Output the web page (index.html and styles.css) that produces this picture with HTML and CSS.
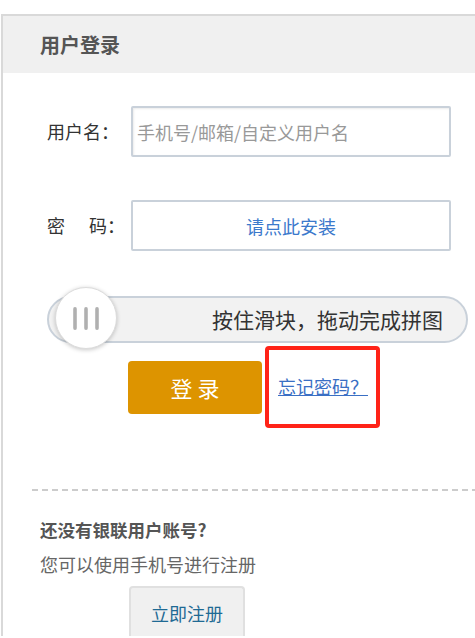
FILE: index.html
```html
<!DOCTYPE html>
<html lang="zh-CN">
<head>
<meta charset="utf-8">
<link rel="stylesheet" href="styles.css">
</head>
<body>
<div class="panel">
  <div class="header"><h2 class="title">用户登录</h2></div>
  <div class="form">
    <div class="row">
      <label class="label">用户名：</label>
      <input class="input" type="text" placeholder="手机号/邮箱/自定义用户名">
    </div>
    <div class="row row-pw">
      <label class="label"><span class="pw-first">密</span>码：</label>
      <div class="input install">请点此安装</div>
    </div>
    <div class="slider">
      <div class="knob"><span class="bar"></span><span class="bar"></span><span class="bar"></span></div>
      <span class="slider-text">按住滑块，拖动完成拼图</span>
    </div>
    <div class="actions">
      <button class="login">登 录</button>
      <div class="mark"><a class="forgot" href="#">忘记密码？</a></div>
    </div>
  </div>
  <div class="divider"></div>
  <div class="register">
    <div class="reg-title">还没有银联用户账号?</div>
    <div class="reg-desc">您可以使用手机号进行注册</div>
    <button class="reg-btn">立即注册</button>
  </div>
</div>
</body>
</html>
```
FILE: styles.css
```css
* { box-sizing: border-box; }
html, body { margin: 0; padding: 0; background: #fff; }
body {
  font-family: "Noto Sans CJK SC", "Noto Sans", sans-serif;
  color: #333;
  overflow: hidden;
}
.panel {
  margin: 14px 0 0 1px;
  border-top: 2px solid #d9d9d9;
  border-left: 2px solid #d9d9d9;
}
.header {
  height: 57px;
  background: #f0f0f0;
  padding-left: 37px;
  display: flex;
  align-items: center;
}
.title {
  margin: 0;
  font-size: 20px;
  font-weight: bold;
  color: #555;
  line-height: 1;
}
.form {
  padding-left: 44px;
  padding-top: 33px;
}
.row {
  display: flex;
  align-items: center;
}
.row-pw { margin-top: 43px; }
.label {
  width: 84px;
  font-size: 18px;
  color: #333;
  line-height: 1;
  margin-top: -2px;
}
.pw-first { margin-right: 24px; }
.input {
  width: 320px;
  height: 51px;
  border: 2px solid #c9d1da;
  border-radius: 2px;
  font-family: inherit;
  font-size: 18px;
  padding: 0 4px;
  outline: none;
  box-shadow: inset 1px 1px 2px rgba(0,0,0,0.08);
}
.input::placeholder { color: #999; }
.install {
  display: flex;
  align-items: center;
  justify-content: center;
  color: #3b79cc;
  box-shadow: none;
}
.slider {
  position: relative;
  margin-top: 45px;
  width: 421px;
  height: 47px;
  border: 2px solid #c9d1da;
  border-radius: 24px;
  background: #f2f2f2;
  display: flex;
  align-items: center;
  justify-content: flex-end;
  padding-right: 23px;
}
.slider-text {
  font-size: 21px;
  color: #333;
  line-height: 1;
}
.knob {
  position: absolute;
  left: 6px;
  top: -11px;
  width: 62px;
  height: 62px;
  border-radius: 50%;
  background: #fff;
  border: 1px solid #dcdcdc;
  box-shadow: 0 1px 4px rgba(0,0,0,0.22);
  display: flex;
  align-items: center;
  justify-content: center;
  gap: 7px;
}
.bar {
  width: 4px;
  height: 23px;
  border-radius: 2px;
  background: linear-gradient(to right, #c8c8c8, #a8a8a8, #c8c8c8);
}
.actions {
  display: flex;
  align-items: center;
  margin-top: 3px;
  margin-left: 81px;
}
.login {
  width: 134px;
  height: 53px;
  border: none;
  border-radius: 4px;
  background: #dd9400;
  color: #fff;
  font-family: inherit;
  font-size: 22px;
  padding: 0;
}
.mark {
  margin-left: 3px;
  width: 115px;
  height: 82px;
  border: 4px solid #ff2318;
  border-radius: 4px;
  display: flex;
  align-items: center;
  padding-left: 9px;
}
.forgot {
  font-size: 18px;
  color: #3a6fc4;
  text-decoration: underline;
  line-height: 1;
  margin-top: -2px;
}
.divider {
  margin: 61px 0 0 29px;
  height: 2px;
  background: repeating-linear-gradient(to right, #cccccc 0 6px, transparent 6px 10px);
}
.register {
  padding-left: 37px;
  padding-top: 27px;
}
.reg-title {
  font-size: 17.5px;
  font-weight: bold;
  color: #555;
  line-height: 24px;
}
.reg-desc {
  margin-top: 10px;
  font-size: 18px;
  color: #666;
  line-height: 24px;
}
.reg-btn {
  display: block;
  margin-top: 10px;
  margin-left: 89px;
  width: 116px;
  height: 50px;
  border: 2px solid #e0e0e0;
  border-bottom: none;
  border-radius: 4px 4px 0 0;
  background: #f0f0f0;
  color: #1f6a94;
  font-family: inherit;
  font-size: 18px;
  padding: 2px 0 0;
}
```
